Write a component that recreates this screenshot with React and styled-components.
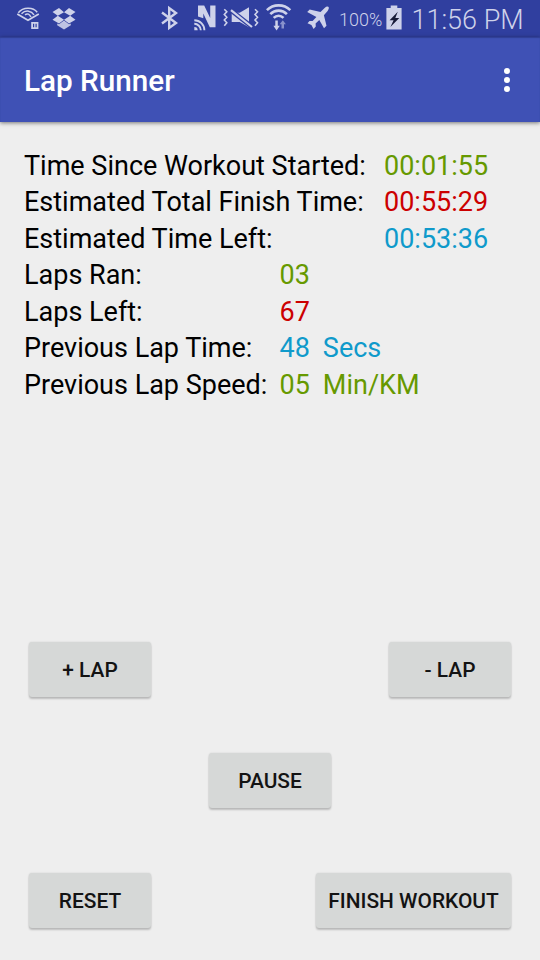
import React from "react";
import styled, { createGlobalStyle } from "styled-components";

const palette = { green: "#669900", red: "#cc0000", blue: "#0f9acb" };

const GlobalStyle = createGlobalStyle`
  body {
    margin: 0;
    background: #eeeeee;
    font-family: Roboto, "Liberation Sans", sans-serif;
  }
`;

const Screen = styled.main`
  width: 540px;
  height: 960px;
  display: flex;
  flex-direction: column;
  overflow: hidden;
  background: #eeeeee;
`;

const StatusBar = styled.header`
  flex: none;
  height: 37px;
  box-sizing: border-box;
  padding-left: 16px;
  display: flex;
  background: #303f9f;
  color: #ced2ea;
`;

const StatusIcon = styled.svg`
  flex: none;
  width: ${(p) => p.$width}px;
  height: 37px;
  margin-right: ${(p) => p.$gap}px;
  fill: none;
  stroke: none;
`;

const BatteryLevel = styled.span`
  flex: none;
  width: 46px;
  line-height: 39px;
  font-size: 18px;
  font-weight: 300;
  white-space: nowrap;
`;

const Clock = styled.time`
  flex: none;
  line-height: 40px;
  font-size: 27px;
  font-weight: 300;
  white-space: nowrap;
`;

const AppBar = styled.div`
  flex: none;
  height: 85px;
  box-sizing: border-box;
  padding: 0 24px;
  display: flex;
  align-items: center;
  justify-content: space-between;
  background: #3f51b5;
  color: #fff;
  box-shadow: inset 0 1px 1px rgba(20, 30, 90, 0.35), 0 1px 4px rgba(0, 0, 0, 0.5);
`;

const Title = styled.h1`
  margin: 0;
  padding-top: 2px;
  font-size: 29.7px;
  line-height: 36px;
  font-weight: 500;
`;

const MenuButton = styled.button`
  border: 0;
  padding: 0;
  width: 18px;
  height: 30px;
  background: none;
  display: flex;
  flex-direction: column;
  align-items: center;
  justify-content: center;
  gap: 3px;
`;

const Dot = styled.span`
  width: 6px;
  height: 6px;
  border-radius: 50%;
  background: #fff;
`;

const Stats = styled.section`
  flex: none;
  padding: 25.5px 24px 0;
`;

const StatRow = styled.div`
  display: grid;
  grid-template-columns: ${(p) => p.$labelWidth}px auto 1fr;
  height: 36.5px;
  line-height: 36.5px;
  font-size: 27px;
  color: #000;
  white-space: nowrap;
`;

const Value = styled.span`
  color: ${(p) => palette[p.$tone]};
`;

const Unit = styled(Value)`
  margin-left: 13px;
`;

const Controls = styled.section`
  margin-top: auto;
  padding: 0 29px 32px;
  display: flex;
  flex-direction: column;
`;

const ControlRow = styled.div`
  display: flex;
  justify-content: ${(p) => (p.$centered ? "center" : "space-between")};
  margin-top: ${(p) => p.$top || 0}px;
`;

const ActionButton = styled.button`
  width: ${(p) => p.$width || 122}px;
  height: 55px;
  border: 0;
  padding: 1px 0 0;
  border-radius: 3px;
  background: #d6d8d7;
  box-shadow: 0 2px 2px rgba(0, 0, 0, 0.2), 0 0 2px rgba(0, 0, 0, 0.12);
  color: #131313;
  font: 500 20.9px/55px Roboto, "Liberation Sans", sans-serif;
  white-space: nowrap;
`;

const timings = [
  { label: "Time Since Workout Started:", value: "00:01:55", tone: "green" },
  { label: "Estimated Total Finish Time:", value: "00:55:29", tone: "red" },
  { label: "Estimated Time Left:", value: "00:53:36", tone: "blue" },
];

const laps = [
  { label: "Laps Ran:", value: "03", tone: "green" },
  { label: "Laps Left:", value: "67", tone: "red" },
  { label: "Previous Lap Time:", value: "48", unit: "Secs", tone: "blue" },
  { label: "Previous Lap Speed:", value: "05", unit: "Min/KM", tone: "green" },
];

const AudibleIcon = () => (
  <StatusIcon $width={24} $gap={12} viewBox="16 0 24 37">
    <g stroke="currentColor" strokeWidth="1.5">
      <path d="M17.3 14 28 20.3 38.8 14" strokeWidth="1.8" />
      <path d="M18.3 12.8C23 7 33 6.900 37.200 12.300" />
      <path d="M21.500 13.800C26 9.300 31.500 11 34 14.900" />
      <path d="M25 14.800C27.500 13 29.500 14.200 31 17" />
    </g>
    <path fill="currentColor" fillRule="evenodd" d="M31.200 22h7.200v7h-7.200zM33 23.700v3.600h1.200v-3.600zM35.500 23.700v3.600h1.200v-3.600z" />
  </StatusIcon>
);

const DropboxIcon = () => (
  <StatusIcon $width={24} $gap={85} viewBox="52 0 24 37">
    <path
      fill="currentColor"
      d="M59 8 64 12.200 57.800 15.800 52.500 11.900zM69 8 64 12.200 70.200 15.800 75.500 11.900zM52.500 19.800 57.800 15.800 64 19.800 59 23.500zM75.500 19.800 70.200 15.800 64 19.800 69 23.500z"
    />
    <path fill="currentColor" d="M57.200 23.400 59 24.300 64 20.500 69 24.300 70.800 23.400V25.200L64 29.400 57.200 25.200z" opacity=".9" />
  </StatusIcon>
);

const BluetoothIcon = () => (
  <StatusIcon $width={18} $gap={14} viewBox="161 0 18 37">
    <path stroke="currentColor" strokeWidth="2.400" d="M162 12.500 176 23 169.200 28V8L176 13 162 23.500" />
  </StatusIcon>
);

const NfcIcon = () => (
  <StatusIcon $width={24} $gap={5} viewBox="193 0 24 37">
    <path fill="currentColor" d="M198 5.400h6.200l6 12.500V5.400h5.300v21.900h-5.700L203.300 13.500V18.200L198 16.600z" />
    <path fill="currentColor" d="M194.300 26.900a3.400 3.400 0 0 1 3.400 3.400h-3.400z" />
    <path stroke="currentColor" strokeWidth="1.900" d="M194.300 23.800a6.500 6.500 0 0 1 6.500 6.500M194.300 20.200a10.100 10.100 0 0 1 10.100 10.100" />
  </StatusIcon>
);

const VibrateIcon = () => (
  <StatusIcon $width={38} $gap={6} viewBox="222 0 38 37">
    <path fill="currentColor" d="M231.700 12.800h8l9.300-5.500v20l-9.300-5.200h-8z" />
    <path stroke="#303f9f" strokeWidth="4.600" d="M229.500 9.100 253 27.800" />
    <path stroke="currentColor" strokeWidth="2.200" d="M231 10.200 252 27" />
    <path
      stroke="currentColor"
      strokeWidth="1.600"
      d="M224.300 9.300 226.800 11.800 224.300 14.500 226.800 17.300 224.300 20 226.800 22.800 224.300 25.700M255 9.300 257.500 11.800 255 14.500 257.500 17.300 255 20 257.500 22.800 255 25.700"
    />
  </StatusIcon>
);

const WifiIcon = () => (
  <StatusIcon $width={26} $gap={14} viewBox="266 0 26 37">
    <g stroke="currentColor" strokeWidth="2.600">
      <path d="M266.900 10.200C273.300 3.800 283.900 3.800 290.300 10.200" />
      <path d="M270.300 14.100C274.900 9.500 282.300 9.500 286.900 14.100" />
      <path d="M273.700 17.900C276.600 15 280.600 15 283.500 17.900" />
    </g>
    <path fill="currentColor" d="M275.300 20.500h2.500v5.300h2l-3.200 4.700-3.200-4.700h1.900z" />
    <path fill="#8992cc" d="M281.500 28.500v-4.300h-1.800l3.100-4 3.100 4h-1.900v4.300z" />
  </StatusIcon>
);

const AirplaneIcon = () => (
  <StatusIcon $width={24} $gap={9} viewBox="306 0 24 37">
    <path
      fill="currentColor"
      d="M328.700 7.100Q329.400 8.700 327.600 10.900L323.900 15.200 326.500 25.800 324 28.300 319.300 20 315.600 23.500 315.800 26.500 313.600 28.900 311.400 25.100 307.500 23.200 309.500 21 312.600 21 316.400 17 307.200 12.100 309.700 9.600 320.500 12 324.600 8Q327.300 5.700 328.700 7.100z"
    />
  </StatusIcon>
);

const BatteryIcon = () => (
  <StatusIcon $width={18} $gap={8.5} viewBox="385 0 18 37">
    <path fill="currentColor" d="M390.700 5.500h6.600v2.500h4.300v21.400h-15.200V8h4.300z" />
    <path fill="#171b38" d="M397.800 11.800 389.600 20.200h4l-3.200 6.900 8.900-9h-4z" />
  </StatusIcon>
);

const renderRow = (labelWidth) => ({ label, value, unit, tone }) => (
  <StatRow key={label} $labelWidth={labelWidth}>
    <span>{label}</span>
    <Value $tone={tone}>{value}</Value>
    {unit && <Unit $tone={tone}>{unit}</Unit>}
  </StatRow>
);

export default function App() {
  return (
    <>
      <GlobalStyle />
      <Screen>
        <StatusBar>
          <AudibleIcon />
          <DropboxIcon />
          <BluetoothIcon />
          <NfcIcon />
          <VibrateIcon />
          <WifiIcon />
          <AirplaneIcon />
          <BatteryLevel>100%</BatteryLevel>
          <BatteryIcon />
          <Clock>11:56 PM</Clock>
        </StatusBar>
        <AppBar>
          <Title>Lap Runner</Title>
          <MenuButton aria-label="More options">
            <Dot />
            <Dot />
            <Dot />
          </MenuButton>
        </AppBar>
        <Stats>
          {timings.map(renderRow(360))}
          {laps.map(renderRow(255.5))}
        </Stats>
        <Controls>
          <ControlRow>
            <ActionButton>+ LAP</ActionButton>
            <ActionButton>- LAP</ActionButton>
          </ControlRow>
          <ControlRow $centered $top={56}>
            <ActionButton>PAUSE</ActionButton>
          </ControlRow>
          <ControlRow $top={65}>
            <ActionButton>RESET</ActionButton>
            <ActionButton $width={195}>FINISH WORKOUT</ActionButton>
          </ControlRow>
        </Controls>
      </Screen>
    </>
  );
}
